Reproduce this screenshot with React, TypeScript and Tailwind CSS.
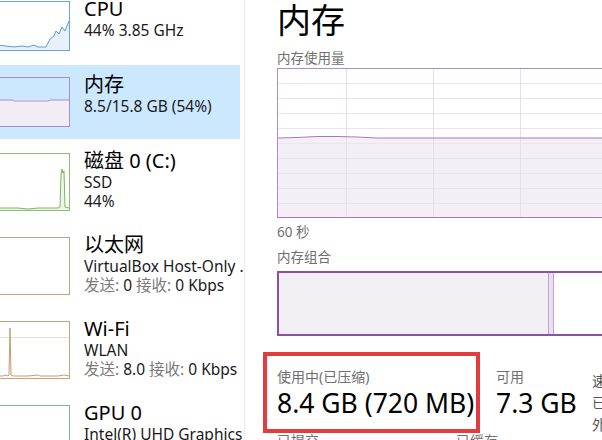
import React from 'react';

type Item = {
  title: string;
  lines: React.ReactNode[];
  graph: React.ReactNode;
  h: string;
  selected?: boolean;
};

const font = { fontFamily: '"Noto Sans", "Noto Sans CJK SC", sans-serif' };

function CpuGraph() {
  const pts = '0,44 8,45 16,46 24,45 30,46 36,44 40,46 48,46 52,38 56,35 58,30 61,33 64,26 67,30 71,20';
  return (
    <svg width="73" height="50" viewBox="0 0 73 50" className="block">
      <polygon points={`${pts} 71,49 0,49`} fill="#e8f1fa" />
      <polyline points={pts} fill="none" stroke="#5b9bd5" strokeWidth="1" />
      <rect x="0.5" y="0.5" width="71" height="49" fill="none" stroke="#6aa3d8" />
    </svg>
  );
}

function MemGraph() {
  return (
    <svg width="73" height="50" viewBox="0 0 73 50" className="block">
      <rect x="0" y="23" width="72" height="27" fill="#f2edf4" />
      <polyline points="0,23 14,23 16,24 50,24 52,23 72,23" fill="none" stroke="#b28cc6" strokeWidth="1" />
      <rect x="0.5" y="0.5" width="71" height="49" fill="none" stroke="#b08bc4" />
    </svg>
  );
}

function DiskGraph() {
  const pts = '0,55 20,55 30,56 40,55 50,55 60,55 62,54 63,22 64,16 65,20 66,18 67,54 71,55';
  return (
    <svg width="73" height="58" viewBox="0 0 73 58" className="block">
      <polygon points={`${pts} 71,57 0,57`} fill="#eef6e8" />
      <polyline points={pts} fill="none" stroke="#7db55f" strokeWidth="1" />
      <rect x="0.5" y="0.5" width="71" height="57" fill="none" stroke="#8dbd70" />
    </svg>
  );
}

function NetGraph({ spike }: { spike?: boolean }) {
  return (
    <svg width="73" height="58" viewBox="0 0 73 58" className="block">
      {spike && <line x1="0" y1="16.5" x2="72" y2="16.5" stroke="#eadfd2" />}
      {spike && (
        <polyline
          points="0,55 5,55 8,54 10,55 11,54 12,7 13,54 15,55 30,55 40,54 42,55 60,55 66,54 71,55"
          fill="none"
          stroke="#c59b6f"
          strokeWidth="1"
        />
      )}
      <rect x="0.5" y="0.5" width="71" height="57" fill="none" stroke="#c9a27c" />
    </svg>
  );
}

function GpuGraph() {
  return (
    <svg width="73" height="58" viewBox="0 0 73 58" className="block">
      <rect x="0.5" y="0.5" width="71" height="57" fill="none" stroke="#7aa9d4" />
    </svg>
  );
}

const Gray = ({ children }: { children: React.ReactNode }) => (
  <span className="text-[#7a7a7a]">{children}</span>
);

const items: Item[] = [
  { title: 'CPU', lines: ['44% 3.85 GHz'], graph: <CpuGraph />, h: 'h-[50px]' },
  { title: '内存', lines: ['8.5/15.8 GB (54%)'], graph: <MemGraph />, h: 'h-[50px]', selected: true },
  { title: '磁盘 0 (C:)', lines: ['SSD', '44%'], graph: <DiskGraph />, h: 'h-[58px]' },
  {
    title: '以太网',
    lines: [
      'VirtualBox Host-Only ...',
      <>
        <Gray>发送:</Gray> 0 <Gray>接收:</Gray> 0 Kbps
      </>,
    ],
    graph: <NetGraph />,
    h: 'h-[58px]',
  },
  {
    title: 'Wi-Fi',
    lines: [
      'WLAN',
      <>
        <Gray>发送:</Gray> 8.0 <Gray>接收:</Gray> 0 Kbps
      </>,
    ],
    graph: <NetGraph spike />,
    h: 'h-[58px]',
  },
  { title: 'GPU 0', lines: ['Intel(R) UHD Graphics'], graph: <GpuGraph />, h: 'h-[58px]' },
];

function SideItem({ item }: { item: Item }) {
  return (
    <div className={`flex w-[240px] shrink-0 py-3 ${item.selected ? 'bg-[#cce8ff]' : ''}`}>
      <div className={`-ml-[2px] w-[73px] shrink-0 overflow-hidden ${item.h}`}>{item.graph}</div>
      <div className="ml-[13px] -mt-[4px] min-w-0 flex-1 whitespace-nowrap">
        <div className="text-[20px] leading-[24px] text-black">{item.title}</div>
        {item.lines.map((l, i) => (
          <div key={i} className="text-[15.5px] leading-[19px] text-[#1a1a1a]">
            {l}
          </div>
        ))}
      </div>
    </div>
  );
}

function UsageChart() {
  const hLines = [15, 30, 45, 60, 75, 90, 105, 120, 135];
  const vLines = [69, 156, 243];
  return (
    <svg width="340" height="150" viewBox="0 0 340 150" className="block">
      <rect x="0" y="0" width="340" height="150" fill="#ffffff" />
      <polygon
        points="0,70 20,69.5 40,68.5 60,68.5 80,69 100,70 340,70 340,150 0,150"
        fill="#f4eff6"
      />
      {hLines.map((y) => (
        <line key={y} x1="0" y1={y + 0.5} x2="340" y2={y + 0.5} stroke="#ebe4ee" />
      ))}
      {vLines.map((x) => (
        <line key={x} x1={x + 0.5} y1="0" x2={x + 0.5} y2="150" stroke="#e6dfe9" />
      ))}
      <polyline
        points="0,70 20,69.5 40,68.5 60,68.5 80,69 100,70 340,70"
        fill="none"
        stroke="#a57bbd"
        strokeWidth="1"
      />
      <line x1="0" y1="0.5" x2="340" y2="0.5" stroke="#b08bc4" />
      <line x1="0" y1="149.5" x2="340" y2="149.5" stroke="#a57bbd" />
      <line x1="0.5" y1="0" x2="0.5" y2="150" stroke="#b08bc4" />
    </svg>
  );
}

export default function App() {
  return (
    <div className="flex h-[440px] w-[602px] overflow-hidden bg-white" style={font}>
      {/* sidebar */}
      <div className="flex w-[245px] shrink-0 flex-col gap-[2px] overflow-hidden border-r border-[#ececec] -mt-[11px]">
        {items.map((it) => (
          <SideItem key={it.title} item={it} />
        ))}
      </div>

      {/* main */}
      <div className="min-w-0 flex-1 overflow-hidden pl-[32px]">
        <div className="w-[340px]">
          <div className="mb-[8px] h-[40px] text-[34px] leading-[40px] text-black">内存</div>
          <div className="h-[20px] text-[13.5px] leading-[20px] text-[#6f6f6f]">内存使用量</div>
          <UsageChart />
          <div className="h-[28px] text-[13.5px] leading-[28px] text-[#6f6f6f]">60 秒</div>
          <div className="mb-[3px] h-[22px] text-[13.5px] leading-[22px] text-[#6f6f6f]">内存组合</div>

          <div className="flex h-[65px] border-2 border-r-0 border-[#8d4fa8]">
            <div className="w-[269px] bg-[#f1eff3]" />
            <div className="w-[6px] border-x border-[#bfa3cf] bg-[#eadff0]" />
            <div className="flex-1 bg-white" />
          </div>

          {/* stats */}
          <div className="mt-[16px] flex h-[81px]">
            <div className="-ml-[14px] h-[81px] w-[217px] shrink-0 border-4 border-[#e63b3e] pl-[10px] pt-[11px]">
              <div className="text-[14px] leading-[20px] text-[#6f6f6f]">使用中(已压缩)</div>
              <div className="whitespace-nowrap text-[26.5px] leading-[32px] text-black">8.4 GB (720 MB)</div>
            </div>
            <div className="ml-[16px] w-[96px] shrink-0 pt-[15px]">
              <div className="text-[14px] leading-[20px] text-[#6f6f6f]">可用</div>
              <div className="whitespace-nowrap text-[26.5px] leading-[32px] text-black">7.3 GB</div>
            </div>
            <div className="shrink-0 pt-[18px] text-[14px] leading-[22px] text-[#555]">
              <div>速度:</div>
              <div>已使用的插槽:</div>
              <div>外形规格:</div>
            </div>
          </div>

          <div className="-mt-[2px] flex text-[14px] leading-[20px] text-[#6f6f6f]">
            <div className="w-[179px]">已提交</div>
            <div>已缓存</div>
          </div>
        </div>
      </div>
    </div>
  );
}
